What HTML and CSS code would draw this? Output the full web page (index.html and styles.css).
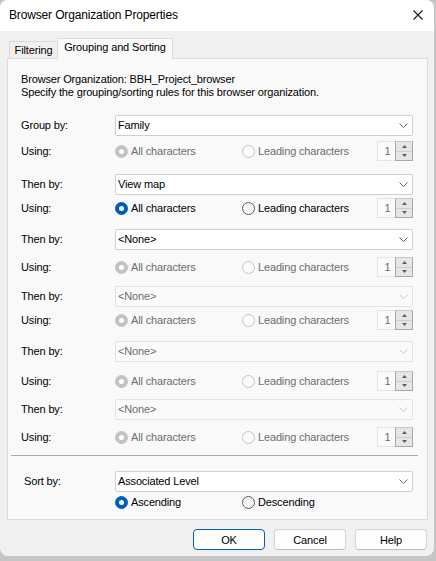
FILE: index.html
```html
<!DOCTYPE html>
<html>
<head>
<meta charset="utf-8">
<link rel="stylesheet" href="styles.css">
</head>
<body>
<div class="window">
  <div class="titlebar">
    <span class="title">Browser Organization Properties</span>
    <svg class="close" width="10" height="10" viewBox="0 0 10 10"><path d="M0.5 0.5 L9.5 9.5 M9.5 0.5 L0.5 9.5" stroke="#1a1a1a" stroke-width="1.1" fill="none"/></svg>
  </div>
  <div class="tabs">
    <div class="tab">Filtering</div>
    <div class="tab active">Grouping and Sorting</div>
  </div>
  <div class="panel">
    <div class="info">
      <div>Browser Organization: BBH_Project_browser</div>
      <div>Specify the grouping/sorting rules for this browser organization.</div>
    </div>

    <div class="row combo-row mt16">
      <span class="label">Group by:</span>
      <div class="combo"><span>Family</span><svg class="chev" width="9" height="5" viewBox="0 0 9 5"><path d="M0.5 0.5 L4.5 4.5 L8.5 0.5" fill="none" stroke="#606060"/></svg></div>
    </div>
    <div class="row using-row mt5">
      <span class="label">Using:</span>
      <span class="opt dis"><span class="radio on"></span>All characters</span>
      <span class="opt dis"><span class="radio"></span>Leading characters</span>
      <span class="spin"><span class="spin-field">1</span><span class="spin-btns"><span class="sb"><svg width="5" height="3" viewBox="0 0 5 3"><path d="M0 3 L2.5 0 L5 3Z" fill="#606060"/></svg></span><span class="sb down"><svg width="5" height="3" viewBox="0 0 5 3"><path d="M0 0 L2.5 3 L5 0Z" fill="#606060"/></svg></span></span></span>
    </div>

    <div class="row combo-row mt13">
      <span class="label">Then by:</span>
      <div class="combo"><span>View map</span><svg class="chev" width="9" height="5" viewBox="0 0 9 5"><path d="M0.5 0.5 L4.5 4.5 L8.5 0.5" fill="none" stroke="#606060"/></svg></div>
    </div>
    <div class="row using-row mt3">
      <span class="label">Using:</span>
      <span class="opt"><span class="radio on"></span>All characters</span>
      <span class="opt"><span class="radio"></span>Leading characters</span>
      <span class="spin"><span class="spin-field">1</span><span class="spin-btns"><span class="sb"><svg width="5" height="3" viewBox="0 0 5 3"><path d="M0 3 L2.5 0 L5 3Z" fill="#606060"/></svg></span><span class="sb down"><svg width="5" height="3" viewBox="0 0 5 3"><path d="M0 0 L2.5 3 L5 0Z" fill="#606060"/></svg></span></span></span>
    </div>

    <div class="row combo-row mt11">
      <span class="label">Then by:</span>
      <div class="combo"><span>&lt;None&gt;</span><svg class="chev" width="9" height="5" viewBox="0 0 9 5"><path d="M0.5 0.5 L4.5 4.5 L8.5 0.5" fill="none" stroke="#606060"/></svg></div>
    </div>
    <div class="row using-row mt7">
      <span class="label">Using:</span>
      <span class="opt dis"><span class="radio on"></span>All characters</span>
      <span class="opt dis"><span class="radio"></span>Leading characters</span>
      <span class="spin"><span class="spin-field">1</span><span class="spin-btns"><span class="sb"><svg width="5" height="3" viewBox="0 0 5 3"><path d="M0 3 L2.5 0 L5 3Z" fill="#606060"/></svg></span><span class="sb down"><svg width="5" height="3" viewBox="0 0 5 3"><path d="M0 0 L2.5 3 L5 0Z" fill="#606060"/></svg></span></span></span>
    </div>

    <div class="row combo-row mt9">
      <span class="label">Then by:</span>
      <div class="combo dis"><span>&lt;None&gt;</span><svg class="chev" width="9" height="5" viewBox="0 0 9 5"><path d="M0.5 0.5 L4.5 4.5 L8.5 0.5" fill="none" stroke="#c8c8c8"/></svg></div>
    </div>
    <div class="row using-row mt3">
      <span class="label">Using:</span>
      <span class="opt dis"><span class="radio on"></span>All characters</span>
      <span class="opt dis"><span class="radio"></span>Leading characters</span>
      <span class="spin"><span class="spin-field">1</span><span class="spin-btns"><span class="sb"><svg width="5" height="3" viewBox="0 0 5 3"><path d="M0 3 L2.5 0 L5 3Z" fill="#606060"/></svg></span><span class="sb down"><svg width="5" height="3" viewBox="0 0 5 3"><path d="M0 0 L2.5 3 L5 0Z" fill="#606060"/></svg></span></span></span>
    </div>

    <div class="row combo-row mt11">
      <span class="label">Then by:</span>
      <div class="combo dis"><span>&lt;None&gt;</span><svg class="chev" width="9" height="5" viewBox="0 0 9 5"><path d="M0.5 0.5 L4.5 4.5 L8.5 0.5" fill="none" stroke="#c8c8c8"/></svg></div>
    </div>
    <div class="row using-row mt9">
      <span class="label">Using:</span>
      <span class="opt dis"><span class="radio on"></span>All characters</span>
      <span class="opt dis"><span class="radio"></span>Leading characters</span>
      <span class="spin"><span class="spin-field">1</span><span class="spin-btns"><span class="sb"><svg width="5" height="3" viewBox="0 0 5 3"><path d="M0 3 L2.5 0 L5 3Z" fill="#606060"/></svg></span><span class="sb down"><svg width="5" height="3" viewBox="0 0 5 3"><path d="M0 0 L2.5 3 L5 0Z" fill="#606060"/></svg></span></span></span>
    </div>

    <div class="row combo-row mt8">
      <span class="label">Then by:</span>
      <div class="combo dis"><span>&lt;None&gt;</span><svg class="chev" width="9" height="5" viewBox="0 0 9 5"><path d="M0.5 0.5 L4.5 4.5 L8.5 0.5" fill="none" stroke="#c8c8c8"/></svg></div>
    </div>
    <div class="row using-row mt7">
      <span class="label">Using:</span>
      <span class="opt dis"><span class="radio on"></span>All characters</span>
      <span class="opt dis"><span class="radio"></span>Leading characters</span>
      <span class="spin"><span class="spin-field">1</span><span class="spin-btns"><span class="sb"><svg width="5" height="3" viewBox="0 0 5 3"><path d="M0 3 L2.5 0 L5 3Z" fill="#606060"/></svg></span><span class="sb down"><svg width="5" height="3" viewBox="0 0 5 3"><path d="M0 0 L2.5 3 L5 0Z" fill="#606060"/></svg></span></span></span>
    </div>

    <div class="sep"></div>

    <div class="row combo-row sort mt15">
      <span class="label">Sort by:</span>
      <div class="combo"><span>Associated Level</span><svg class="chev" width="9" height="5" viewBox="0 0 9 5"><path d="M0.5 0.5 L4.5 4.5 L8.5 0.5" fill="none" stroke="#606060"/></svg></div>
    </div>
    <div class="row order-row mt3">
      <span></span>
      <span class="opt"><span class="radio on"></span>Ascending</span>
      <span class="opt"><span class="radio"></span>Descending</span>
    </div>
  </div>
  <div class="footer">
    <button class="btn default">OK</button>
    <button class="btn">Cancel</button>
    <button class="btn">Help</button>
  </div>
</div>
</body>
</html>
```
FILE: styles.css
```css
* { box-sizing: border-box; }
html, body { margin: 0; padding: 0; }
body {
  width: 436px;
  height: 561px;
  overflow: hidden;
  background: #c6c6c6;
  font-family: "Liberation Sans", Arial, sans-serif;
  font-size: 11px;
  letter-spacing: -0.15px;
  color: #000;
}
.window {
  width: 434px;
  height: 556px;
  background: #f0f0f0;
  border-radius: 8px;
  overflow: hidden;
  display: flex;
  flex-direction: column;
}
.titlebar {
  height: 31px;
  flex: none;
  background: #fff;
  display: flex;
  align-items: center;
  justify-content: space-between;
  padding: 0 11px 0 9px;
}
.title { font-size: 12px; line-height: 31px; }
.close { display: block; margin-top: -1px; }

.tabs {
  display: flex;
  align-items: flex-end;
  height: 27px;
  flex: none;
  padding: 7px 0 0 9px;
}
.tab {
  height: 17px;
  width: 49px;
  border: 1px solid #d9d9d9;
  border-bottom: none;
  background: #f0f0f0;
  text-align: center;
  line-height: 13px;
  padding-top: 2px;
}
.tab.active {
  height: 21px;
  width: 116px;
  margin-left: -1px;
  margin-bottom: -1px;
  background: #f9f9f9;
  border-color: #dcdcdc;
  position: relative;
  z-index: 1;
}

.panel {
  flex: none;
  margin: 0 6px 0 7px;
  height: 462px;
  background: #f9f9f9;
  border: 1px solid #dcdcdc;
  padding: 14px 14px 0 13px;
}
.info { line-height: 13px; }

.row { display: grid; align-items: center; line-height: 13px; }
.combo-row { grid-template-columns: 94px 298px; }
.using-row { grid-template-columns: 94px 127px 135px 36px; }
.order-row { grid-template-columns: 94px 127px 1fr; height: 14px; }
.sort .label { padding-left: 3px; }

.mt3 { margin-top: 3px; }
.mt5 { margin-top: 5px; }
.mt7 { margin-top: 7px; }
.mt8 { margin-top: 8px; }
.mt9 { margin-top: 9px; }
.mt11 { margin-top: 11px; }
.mt13 { margin-top: 13px; }
.mt15 { margin-top: 15px; }
.mt16 { margin-top: 16px; }

.combo {
  height: 21px;
  background: #fff;
  border: 1px solid #cfcfcf;
  border-radius: 2px;
  display: flex;
  align-items: center;
  justify-content: space-between;
  padding: 0 4px 0 2px;
}
.combo.dis {
  background: #fafafa;
  border-color: #e2e2e2;
  color: #6d6d6d;
}
.chev { display: block; }

.opt { display: flex; align-items: center; gap: 3px; white-space: nowrap; }
.opt.dis { color: #6d6d6d; }
.radio {
  width: 13px;
  height: 13px;
  flex: none;
  border-radius: 50%;
  border: 1px solid #5c5c5c;
  background: #f7f7f7;
  display: flex;
  align-items: center;
  justify-content: center;
}
.radio.on { background: #005fb8; border-color: #005fb8; }
.radio.on::after {
  content: "";
  width: 5px;
  height: 5px;
  border-radius: 50%;
  background: #fff;
}
.dis .radio { border-color: #c4c4c4; background: #fbfbfb; }
.dis .radio.on { background: #c2c2c2; border-color: #c2c2c2; }

.spin { display: flex; height: 20px; }
.spin-field {
  width: 18px;
  border: 1px solid #e4e4e4;
  border-right: none;
  background: #fafafa;
  color: #6d6d6d;
  display: flex;
  align-items: center;
  justify-content: center;
  padding-left: 2px;
}
.spin-btns {
  width: 18px;
  border: 1px solid #a8a8a8;
  border-top-color: #c8c8c8;
  background: #e6e6e6;
  display: flex;
  flex-direction: column;
}
.sb {
  flex: 1;
  display: flex;
  align-items: center;
  justify-content: center;
}
.sb.down { border-top: 1px solid #cdcdcd; }
.sb svg { display: block; }

.sep {
  height: 1px;
  background: #acacac;
  margin: 8px -5px 0 -10px;
}

.footer {
  display: flex;
  justify-content: flex-end;
  gap: 9px;
  padding: 9px 7px 0 0;
}
.btn {
  width: 72px;
  height: 21px;
  font-family: inherit;
  font-size: 11px;
  letter-spacing: -0.15px;
  color: #000;
  background: #fdfdfd;
  border: 1px solid #d3d3d3;
  border-bottom-color: #bdbdbd;
  border-radius: 4px;
  padding: 0;
}
.btn.default { border-color: #005fb8; }
```
